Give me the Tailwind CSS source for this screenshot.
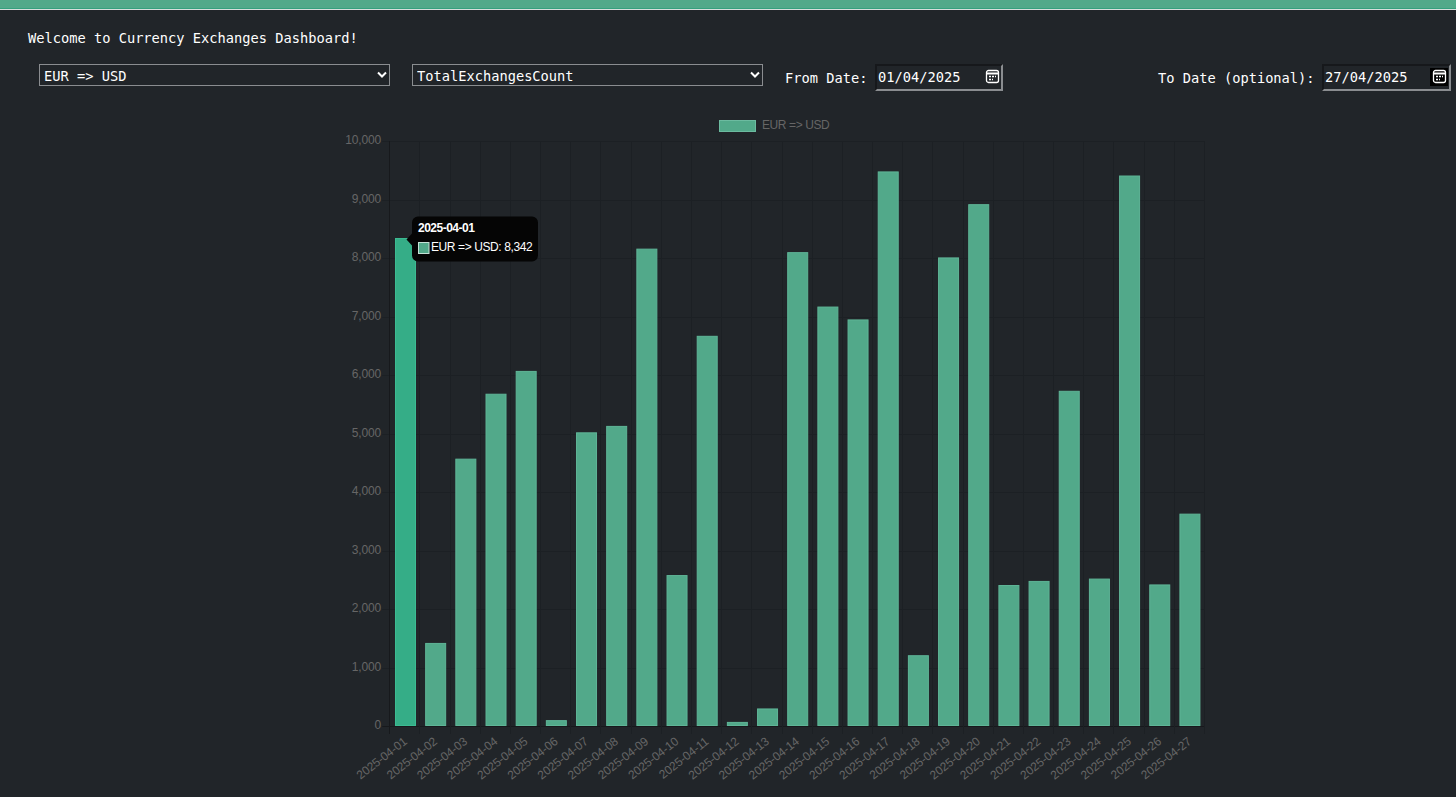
<!DOCTYPE html>
<html lang="en">
<head>
  <meta charset="UTF-8">
  <meta name="viewport" content="width=device-width, initial-scale=1.0">
  <title>Currency Exchanges Dashboard</title>
  <script src="https://cdn.jsdelivr.net/npm/@tailwindcss/browser@4"></script>
</head>
<body class="bg-[#212529] text-white h-[797px] overflow-hidden font-['DejaVu_Sans_Mono',monospace] text-[13.7px]">
  <div class="h-[10px] border-b border-[#d8dedc]">
    <div class="h-[9px] bg-[#52a98a] border-b border-[#35a07e]"></div>
  </div>

  <h1 class="pl-[28px] pt-[20px] h-[54px] leading-[17px] font-normal">Welcome to Currency Exchanges Dashboard!</h1>

  <div class="flex items-start pl-[39px] pr-[5px] h-[36px]">
    <div class="relative w-[351px] h-[22px]">
      <select class="appearance-none w-full h-full bg-[#212529] border border-[#8a8d90] pl-[4px] pt-px text-white">
        <option>EUR =&gt; USD</option>
      </select>
      <svg class="absolute right-[3px] top-[7px]" width="10" height="8" viewBox="0 0 10 8" fill="none" stroke="white" stroke-width="2"><path d="M1 1.5l4 4 4-4"/></svg>
    </div>
    <div class="relative w-[351px] h-[22px] ml-[22px]">
      <select class="appearance-none w-full h-full bg-[#212529] border border-[#8a8d90] pl-[4px] pt-px text-white">
        <option>TotalExchangesCount</option>
      </select>
      <svg class="absolute right-[3px] top-[7px]" width="10" height="8" viewBox="0 0 10 8" fill="none" stroke="white" stroke-width="2"><path d="M1 1.5l4 4 4-4"/></svg>
    </div>

    <label class="ml-[22px] mt-[4px] w-[90px]">From Date:</label>
    <div class="relative w-[128px] h-[27px]">
      <input type="text" value="01/04/2025" class="w-full h-full bg-[#212529] pl-[1px] pb-[2px] text-white border-2 border-t-[#16181b] border-l-[#16181b] border-r-[#8a8d90] border-b-[#8a8d90]">
      <svg class="absolute right-[3px] top-[5px]" width="15" height="15" viewBox="0 0 15 15" fill="none" stroke="white" stroke-width="1.3"><rect x="1.5" y="1.5" width="12" height="12" rx="2"/><path d="M1.5 4.5h12" stroke-width="2"/><path d="M4 7.5h7M4 10.5h4" stroke-dasharray="2 1"/></svg>
    </div>

    <label class="ml-auto mt-[4px] w-[164px]">To Date (optional):</label>
    <div class="relative w-[129px] h-[27px]">
      <input type="text" value="27/04/2025" class="w-full h-full bg-[#212529] pl-[1px] pb-[2px] text-white border-2 border-t-[#16181b] border-l-[#16181b] border-r-[#8a8d90] border-b-[#8a8d90]">
      <div class="absolute right-[3px] top-[4px] w-[18px] h-[18px] bg-black"></div>
      <svg class="absolute right-[4px] top-[5px]" width="15" height="15" viewBox="0 0 15 15" fill="none" stroke="white" stroke-width="1.3"><rect x="1.5" y="1.5" width="12" height="12" rx="2"/><path d="M1.5 4.5h12" stroke-width="2"/><path d="M4 7.5h7M4 10.5h4" stroke-dasharray="2 1"/></svg>
    </div>
  </div>

  <!-- chart, same coordinates as the page -->
  <svg id="chart" class="block font-['Liberation_Sans',sans-serif]" width="1456" height="697" viewBox="0 100 1456 697" font-size="12"></svg>

  <script>
    const values = [8342, 1420, 4570, 5680, 6070, 100, 5020, 5130, 8160, 2580, 6670, 70, 300, 8100, 7170, 6950, 9480, 1210, 8010, 8920, 2410, 2480, 5730, 2520, 9410, 2420, 3630];
    const chart = document.getElementById('chart');
    const left = 390.3, step = 30.17, top0 = 141, base = 726, right = left + step * 27 - 1;
    const yOf = v => base - (v / 10000) * (base - top0);

    function add(tag, attrs, text) {
      const el = document.createElementNS('http://www.w3.org/2000/svg', tag);
      for (const k in attrs) el.setAttribute(k, attrs[k]);
      if (text) el.textContent = text;
      chart.appendChild(el);
      return el;
    }

    // legend
    add('rect', { x: 719.5, y: 120.5, width: 36, height: 11, fill: '#52a98a', stroke: '#6cbba0' });
    add('text', { x: 762, y: 129, fill: '#666', 'letter-spacing': -0.4 }, 'EUR => USD');

    // grid
    for (let i = 0; i <= 10; i++) {
      const y = Math.round(yOf(i * 1000)) + 0.5;
      add('line', { x1: left - 8, x2: right, y1: y, y2: y, stroke: i === 0 ? '#17191c' : '#1c2024' });
      add('text', { x: 381, y: y + 2, fill: '#666', 'text-anchor': 'end', 'letter-spacing': -0.15 }, (i * 1000).toLocaleString('en-US'));
    }
    for (let i = 0; i <= 27; i++) {
      const x = Math.round(left + i * step) - 0.5;
      add('line', { x1: x, x2: x, y1: top0, y2: base + 8, stroke: i === 0 ? '#17191c' : '#1c2024' });
    }

    // bars and date labels
    values.forEach((v, i) => {
      const x = left + step * i + 5;
      const y = yOf(v);
      const active = i === 0;
      add('rect', { x: x + 0.2, y: y + 0.5, width: 20, height: base - y - 1, fill: active ? '#35ad87' : '#52a98a', stroke: active ? '#3cbb92' : '#5fb597' });
      const day = String(i + 1).padStart(2, '0');
      const tx = left + step * i + 17.5;
      add('text', { x: tx, y: 743, fill: '#666', 'text-anchor': 'end', 'letter-spacing': -0.15, transform: `rotate(-38 ${tx} 743)` }, `2025-04-${day}`);
    });

    // tooltip
    add('path', { d: 'M418 216.5h114a6 6 0 0 1 6 6v33a6 6 0 0 1-6 6h-114a6 6 0 0 1-6-6v-10l-5.5-6 5.5-6v-11a6 6 0 0 1 6-6z', fill: '#050505' });
    add('text', { x: 418, y: 232, fill: '#fff', 'font-weight': 'bold', 'letter-spacing': -0.5 }, '2025-04-01');
    add('rect', { x: 418.5, y: 242.5, width: 10.5, height: 11, fill: '#52a98a', stroke: '#c5e2d7' });
    add('text', { x: 431, y: 251, fill: '#fff', 'letter-spacing': -0.4 }, 'EUR => USD: 8,342');
  </script>
</body>
</html>
